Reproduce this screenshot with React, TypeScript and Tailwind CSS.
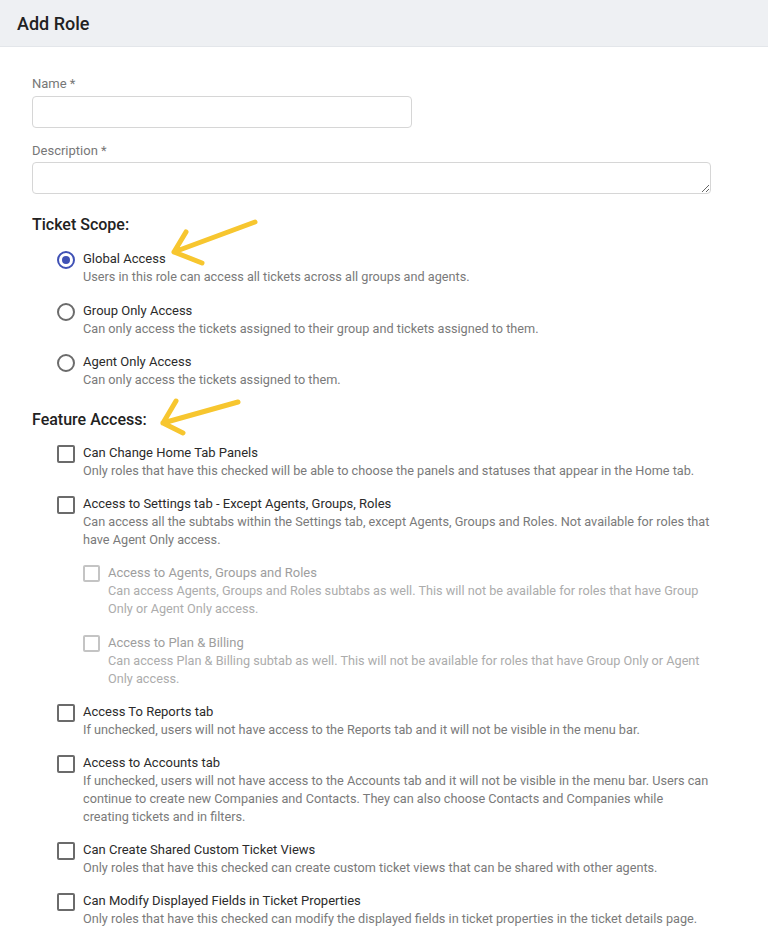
import React from "react";

const font = { fontFamily: "Roboto, 'Liberation Sans', sans-serif" };

function Radio({ checked }: { checked?: boolean }) {
  return (
    <span
      className={`mt-[1px] flex h-[18px] w-[18px] shrink-0 items-center justify-center rounded-full border-2 ${
        checked ? "border-[#3f51b5]" : "border-[#6b6b6b]"
      }`}
    >
      {checked && <span className="h-[8px] w-[8px] rounded-full bg-[#3f51b5]" />}
    </span>
  );
}

function Check({ disabled, small }: { disabled?: boolean; small?: boolean }) {
  return (
    <span
      className={`mt-[1px] block shrink-0 rounded-[2px] border-2 ${small ? "h-[17px] w-[17px]" : "h-[18px] w-[18px]"} ${
        disabled ? "border-[#c4c4c4]" : "border-[#6b6b6b]"
      }`}
    />
  );
}

function Item({
  control,
  label,
  lines,
  disabled,
}: {
  control: React.ReactNode;
  label: string;
  lines: string[];
  disabled?: boolean;
}) {
  return (
    <div className="flex gap-[8px]">
      {control}
      <div className="leading-[18px]">
        <div className={`whitespace-nowrap text-[13px] ${disabled ? "text-[#9e9e9e]" : "text-[#2b2b2b]"}`}>{label}</div>
        {lines.map((l, i) => (
          <div key={i} className={`whitespace-nowrap text-[12.7px] ${disabled ? "text-[#acacac]" : "text-[#7a7a7a]"}`}>
            {l}
          </div>
        ))}
      </div>
    </div>
  );
}

export default function App() {
  return (
    <div className="relative min-h-[927px] w-[768px] bg-white" style={font}>
      <div className="flex h-[47px] items-center border-b border-[#e3e6ea] bg-[#eef0f3] px-[17px]">
        <h1 className="text-[18px] font-medium text-[#222]">Add Role</h1>
      </div>

      <div className="px-[32px] pt-[28px]">
        <label className="block text-[13px] leading-[18px] text-[#777]">Name *</label>
        <input className="mt-[3px] block h-[32px] w-[380px] rounded-[4px] border border-[#d6d6d6] bg-white" />
        <label className="mt-[14px] block text-[13px] leading-[18px] text-[#777]">Description *</label>
        <textarea className="mt-[2px] block h-[32px] w-[679px] rounded-[4px] border border-[#d6d6d6] bg-white" />

        <h2 className="mt-[19px] text-[16px] font-medium leading-[24px] text-[#222]">Ticket Scope:</h2>
        <div className="mt-[13px] flex flex-col gap-[15.5px] pl-[25px]">
          <Item
            control={<Radio checked />}
            label="Global Access"
            lines={["Users in this role can access all tickets across all groups and agents."]}
          />
          <Item
            control={<Radio />}
            label="Group Only Access"
            lines={["Can only access the tickets assigned to their group and tickets assigned to them."]}
          />
          <Item control={<Radio />} label="Agent Only Access" lines={["Can only access the tickets assigned to them."]} />
        </div>

        <h2 className="mt-[19px] text-[16px] font-medium leading-[24px] text-[#222]">Feature Access:</h2>
        <div className="mt-[12px] flex flex-col gap-[15.2px] pl-[25px]">
          <Item
            control={<Check />}
            label="Can Change Home Tab Panels"
            lines={["Only roles that have this checked will be able to choose the panels and statuses that appear in the Home tab."]}
          />
          <Item
            control={<Check />}
            label="Access to Settings tab - Except Agents, Groups, Roles"
            lines={[
              "Can access all the subtabs within the Settings tab, except Agents, Groups and Roles. Not available for roles that",
              "have Agent Only access.",
            ]}
          />
          <div className="flex flex-col gap-[15.2px] pl-[26px]">
            <Item
              control={<Check disabled small />}
              label="Access to Agents, Groups and Roles"
              disabled
              lines={[
                "Can access Agents, Groups and Roles subtabs as well. This will not be available for roles that have Group",
                "Only or Agent Only access.",
              ]}
            />
            <Item
              control={<Check disabled small />}
              label="Access to Plan & Billing"
              disabled
              lines={[
                "Can access Plan & Billing subtab as well. This will not be available for roles that have Group Only or Agent",
                "Only access.",
              ]}
            />
          </div>
          <Item
            control={<Check />}
            label="Access To Reports tab"
            lines={["If unchecked, users will not have access to the Reports tab and it will not be visible in the menu bar."]}
          />
          <Item
            control={<Check />}
            label="Access to Accounts tab"
            lines={[
              "If unchecked, users will not have access to the Accounts tab and it will not be visible in the menu bar. Users can",
              "continue to create new Companies and Contacts. They can also choose Contacts and Companies while",
              "creating tickets and in filters.",
            ]}
          />
          <Item
            control={<Check />}
            label="Can Create Shared Custom Ticket Views"
            lines={["Only roles that have this checked can create custom ticket views that can be shared with other agents."]}
          />
          <Item
            control={<Check />}
            label="Can Modify Displayed Fields in Ticket Properties"
            lines={["Only roles that have this checked can modify the displayed fields in ticket properties in the ticket details page."]}
          />
        </div>
      </div>

      {/* annotation arrows */}
      <svg className="pointer-events-none absolute left-0 top-0" width="768" height="927">
        <g stroke="#f7c62f" strokeWidth="5" strokeLinecap="round" strokeLinejoin="round" fill="none">
          <path d="M255 222 L174 252 M174 252 L186 232 M174 252 L202 263" />
          <path d="M238 402 L163 423 M163 423 L176 401 M163 423 L183 433" />
        </g>
      </svg>
    </div>
  );
}
